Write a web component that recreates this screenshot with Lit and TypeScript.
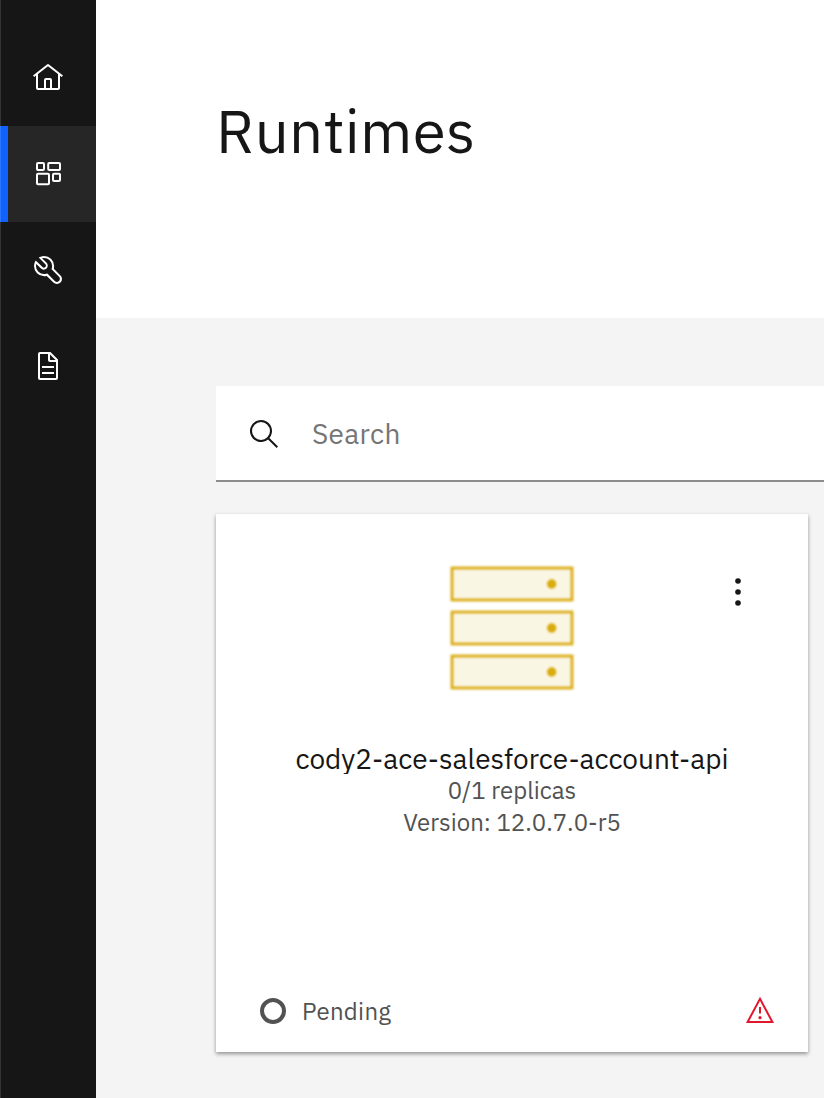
import { LitElement, html, svg, css } from "lit";
import { customElement } from "lit/decorators.js";

const home = svg`<path d="M16.6123,2.2138a1.01,1.01,0,0,0-1.2427,0L1,13.4194l1.2427,1.5717L4,13.621V26a2.0041,2.0041,0,0,0,2,2H26a2.0037,2.0037,0,0,0,2-2V13.63L29.7573,15,31,13.4282ZM18,26H14V18h4Zm2,0V18a2.0023,2.0023,0,0,0-2-2H14a2.002,2.002,0,0,0-2,2v8H6V12.0615l10-7.79,10,7.8005V26Z"/>`;
const dashboard = svg`<g fill="none" stroke="currentColor" stroke-width="2"><rect x="5" y="5" width="7" height="7" rx="1"/><rect x="16.2" y="5" width="11.8" height="7" rx="1"/><rect x="5" y="15.8" width="12" height="10.4" rx="1"/><rect x="21" y="15.8" width="7" height="7.2" rx="1"/></g>`;
const tools = svg`<path d="M12.1,2A9.8,9.8,0,0,0,6.7,3.6L13.1,10a2.1,2.1,0,0,1,.2,3,2.1,2.1,0,0,1-3-.2L3.7,6.4A9.84,9.84,0,0,0,2,12.1,10.14,10.14,0,0,0,12.1,22.2a10.9,10.9,0,0,0,2.6-.3l6.7,6.7a5,5,0,0,0,7.1-7.1l-6.7-6.7a10.9,10.9,0,0,0,.3-2.6A10,10,0,0,0,12.1,2Zm8,10.1a7.61,7.61,0,0,1-.3,2.1l-.3,1.1.8.8,6.7,6.7a2.88,2.88,0,0,1,.9,2.1A2.72,2.72,0,0,1,27,27a2.9,2.9,0,0,1-4.2,0l-6.7-6.7-.8-.8-1.1.3a7.61,7.61,0,0,1-2.1.3,8.27,8.27,0,0,1-5.7-2.3A7.63,7.63,0,0,1,4,12.1a8.33,8.33,0,0,1,.3-2.2l4.4,4.4a4.14,4.14,0,0,0,5.9.2,4.14,4.14,0,0,0-.2-5.9L10,4.2a6.45,6.45,0,0,1,2-.3,8.27,8.27,0,0,1,5.7,2.3A8.49,8.49,0,0,1,20.1,12.1Z"/>`;
const documentIcon = svg`<path d="M25.7,9.3l-7-7C18.5,2.1,18.3,2,18,2H8C6.9,2,6,2.9,6,4v24c0,1.1,0.9,2,2,2h16c1.1,0,2-0.9,2-2V10C26,9.7,25.9,9.5,25.7,9.3z M18,4.4l5.6,5.6H18V4.4z M24,28H8V4h8v6c0,1.1,0.9,2,2,2h6V28z"/><path d="M10 22h12v2H10zM10 16h12v2H10z"/>`;

@customElement("app-root")
export class AppRoot extends LitElement {
  static styles = css`
    :host {
      display: flex;
      height: 100vh;
      overflow: hidden;
      background: #f4f4f4;
      color: #161616;
      font-family: "IBM Plex Sans", Roboto, sans-serif;
    }
    * { box-sizing: border-box; margin: 0; }
    svg { display: block; flex: none; }
    .rail {
      position: relative;
      flex: none;
      width: 96px;
      padding-top: 30px;
      background: #161616;
      color: #fff;
    }
    .rail::after {
      content: "";
      position: absolute;
      inset: 0 auto 0 0;
      width: 1px;
      background: rgba(255, 255, 255, 0.13);
    }
    .item {
      display: flex;
      align-items: center;
      justify-content: center;
      height: 96px;
    }
    .item.active { background: #262626; box-shadow: inset 8px 0 #0f62fe; }
    .main { flex: none; width: 744px; }
    .header { height: 318px; padding: 95px 0 0 120px; background: #fff; }
    h1 { font-size: 60px; line-height: 72px; font-weight: 400; letter-spacing: 0.3px; }
    .content { padding: 68px 0 0 120px; }
    .search {
      display: flex;
      align-items: center;
      gap: 32px;
      height: 96px;
      padding: 2px 0 0 32px;
      background: #fff;
      border-bottom: 2px solid #8d8d8d;
      color: #161616;
    }
    .placeholder { color: #757575; font-size: 28px; line-height: 36px; letter-spacing: 0.32px; }
    .card {
      display: grid;
      grid-template-rows: 223px auto 1fr auto;
      width: 592px;
      height: 538px;
      margin-top: 32px;
      padding-bottom: 25px;
      background: #fff;
      box-shadow: 0 2px 4px rgba(0, 0, 0, 0.4);
    }
    .top { display: grid; grid-template-columns: 1fr 132px 1fr; padding-top: 48px; }
    .servers { filter: blur(0.8px); }
    .menu { justify-self: end; margin: 14px 54px 0 0; }
    .info { text-align: center; color: #525252; font-size: 24px; line-height: 32px; }
    .name {
      height: 37px;
      overflow: hidden;
      color: #161616;
      font-size: 28px;
      line-height: 44px;
      font-weight: 400;
    }
    .footer {
      grid-row: 4;
      display: flex;
      align-items: center;
      padding: 0 32px 0 42px;
      color: #525252;
      font-size: 24px;
      line-height: 32px;
    }
    .status { flex: 1; padding-left: 14px; letter-spacing: 0.32px; }
  `;

  private item(icon: unknown, active = false) {
    return html`<div class="item ${active ? "active" : ""}">
      <svg width="32" height="32" viewBox="0 0 32 32" fill="currentColor">${icon}</svg>
    </div>`;
  }

  render() {
    return html`
      <nav class="rail">
        ${this.item(home)} ${this.item(dashboard, true)} ${this.item(tools)} ${this.item(documentIcon)}
      </nav>
      <main class="main">
        <header class="header"><h1>Runtimes</h1></header>
        <section class="content">
          <div class="search">
            <svg width="32" height="32" viewBox="0 0 32 32" fill="currentColor">
              <path d="M30,28.6l-8.55-8.57a11.0177,11.0177,0,1,0-1.4141,1.4141L28.6,30ZM4,13a9,9,0,1,1,9,9A9.01,9.01,0,0,1,4,13Z"/>
            </svg>
            <span class="placeholder">Search</span>
          </div>
          <article class="card">
            <div class="top">
              <span></span>
              <svg class="servers" width="132" height="132" viewBox="0 0 132 132">
                ${[4, 48, 92].map(
                  (y) => svg`<rect x="6" y=${y + 2} width="120" height="32" fill="#faf6e4" stroke="#dbac14" stroke-width="2.8"/>
                    <circle cx="105.7" cy=${y + 18} r="4.7" fill="#d9ab0c"/>`
                )}
              </svg>
              <svg class="menu" width="32" height="32" viewBox="0 0 32 32" fill="#161616">
                <circle cx="16" cy="5" r="2.8"/><circle cx="16" cy="16" r="2.8"/><circle cx="16" cy="27" r="2.8"/>
              </svg>
            </div>
            <div class="info">
              <h2 class="name">cody2-ace-salesforce-account-api</h2>
              <p>0/1 replicas</p>
              <p>Version: 12.0.7.0-r5</p>
            </div>
            <div class="footer">
              <svg width="30" height="30" viewBox="0 0 30 30">
                <circle cx="15" cy="15" r="11" fill="none" stroke="#525252" stroke-width="4"/>
              </svg>
              <span class="status">Pending</span>
              <svg width="32" height="32" viewBox="0 0 32 32">
                <path d="M16 3.8L28.4 27H3.6Z" fill="none" stroke="#e0182d" stroke-width="2"/>
                <path d="M15 12h2v6.6h-2z" fill="#e0182d"/><circle cx="16" cy="22.7" r="1.6" fill="#e0182d"/>
              </svg>
            </div>
          </article>
        </section>
      </main>`;
  }
}
